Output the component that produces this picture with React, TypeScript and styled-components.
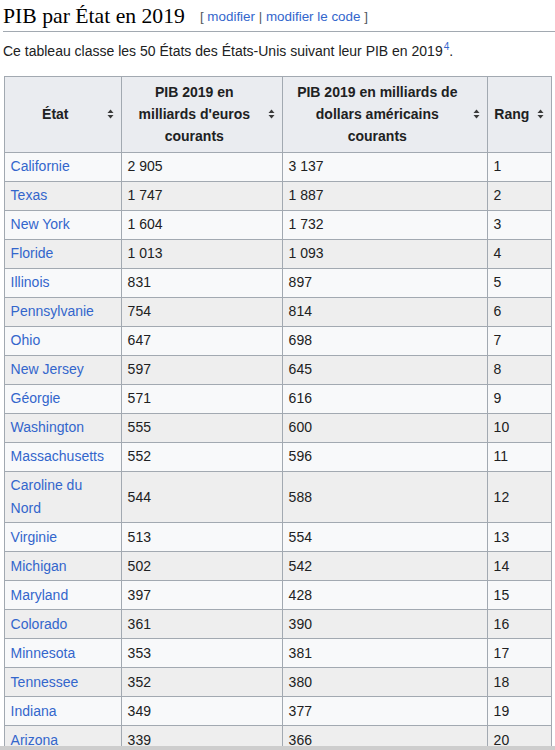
import React from "react";
import styled, { createGlobalStyle } from "styled-components";

const Global = createGlobalStyle`
  html, body { margin: 0; padding: 0; background: #ffffff; }
  body { font-family: "Liberation Sans", Arial, sans-serif; color: #202122; }
`;

const Page = styled.div`
  padding: 0 0 0 3px;
`;

const Heading = styled.h2`
  margin: 0;
  padding: 5px 0 2px;
  border-bottom: 1px solid #a2a9b1;
  font-family: "Liberation Serif", "Times New Roman", serif;
  font-weight: normal;
  font-size: 21.7px;
  line-height: 1.1;
  color: #000;
  display: flex;
  align-items: baseline;
`;

const EditSection = styled.span`
  font-family: "Liberation Sans", Arial, sans-serif;
  font-size: 13.4px;
  color: #54595d;
  margin-left: 15px;
  position: relative;
  top: -2px;
  white-space: pre;
`;

const EditLink = styled.a`
  color: #3366cc;
  text-decoration: none;
`;

const Intro = styled.p`
  margin: 8px 0 0;
  font-size: 14px;
  line-height: 22px;
  color: #202122;
`;

const Sup = styled.sup`
  font-size: 10px;
  line-height: 1;
  margin-left: 1px;
  a { color: #3366cc; text-decoration: none; }
`;

const Table = styled.table`
  margin: 14px 0 0 1px;
  border-collapse: collapse;
  table-layout: fixed;
  width: 547px;
  background: #f8f9fa;
  border: 1px solid #a2a9b1;
  font-size: 14px;
  color: #202122;
`;

const Col = styled.col<{ $w: number }>`
  width: ${(p) => p.$w}px;
`;

const Th = styled.th`
  background: #eaecf0;
  border: 1px solid #a2a9b1;
  padding: 3.8px 21px 3.8px 5.6px;
  line-height: 22.4px;
  font-weight: bold;
  text-align: center;
  position: relative;
`;

const SortIcon = styled.svg`
  position: absolute;
  right: 7px;
  top: 50%;
  margin-top: -5px;
`;

const Row = styled.tr<{ $even: boolean }>`
  background: ${(p) => (p.$even ? "#eeeeee" : "#f8f9fa")};
`;

const Td = styled.td`
  border: 1px solid #a2a9b1;
  padding: 2.8px 5.6px;
  line-height: 22.4px;
  vertical-align: middle;
`;

const Link = styled.a`
  color: #3366cc;
  text-decoration: none;
`;

const BottomBar = styled.div`
  position: fixed;
  left: 0;
  right: 0;
  bottom: 0;
  height: 4px;
  background: #cdcdcd;
`;

const Sort = () => (
  <SortIcon width="7" height="10" viewBox="0 0 7 10">
    <path d="M3.5 0.5 L6.5 4 L0.5 4 Z" fill="#3a3a3a" />
    <path d="M0.5 6 L6.5 6 L3.5 9.5 Z" fill="#3a3a3a" />
  </SortIcon>
);

const rows: [string, string, string, number][] = [
  ["Californie", "2 905", "3 137", 1],
  ["Texas", "1 747", "1 887", 2],
  ["New York", "1 604", "1 732", 3],
  ["Floride", "1 013", "1 093", 4],
  ["Illinois", "831", "897", 5],
  ["Pennsylvanie", "754", "814", 6],
  ["Ohio", "647", "698", 7],
  ["New Jersey", "597", "645", 8],
  ["Géorgie", "571", "616", 9],
  ["Washington", "555", "600", 10],
  ["Massachusetts", "552", "596", 11],
  ["Caroline du Nord", "544", "588", 12],
  ["Virginie", "513", "554", 13],
  ["Michigan", "502", "542", 14],
  ["Maryland", "397", "428", 15],
  ["Colorado", "361", "390", 16],
  ["Minnesota", "353", "381", 17],
  ["Tennessee", "352", "380", 18],
  ["Indiana", "349", "377", 19],
  ["Arizona", "339", "366", 20],
];

export default function App() {
  return (
    <>
      <Global />
      <Page>
        <Heading>
          PIB par État en 2019
          <EditSection>
            {"[ "}
            <EditLink href="#">modifier</EditLink>
            {" | "}
            <EditLink href="#">modifier le code</EditLink>
            {" ]"}
          </EditSection>
        </Heading>
        <Intro>
          Ce tableau classe les 50 États des États-Unis suivant leur PIB en 2019
          <Sup>
            <a href="#">4</a>
          </Sup>
          .
        </Intro>
        <Table>
          <colgroup>
            <Col $w={117} />
            <Col $w={161} />
            <Col $w={205} />
            <Col $w={64} />
          </colgroup>
          <thead>
            <tr>
              <Th>
                État
                <Sort />
              </Th>
              <Th>
                PIB 2019 en milliards d'euros courants
                <Sort />
              </Th>
              <Th>
                PIB 2019 en milliards de dollars américains courants
                <Sort />
              </Th>
              <Th>
                Rang
                <Sort />
              </Th>
            </tr>
          </thead>
          <tbody>
            {rows.map(([name, eur, usd, rank], i) => (
              <Row key={name} $even={i % 2 === 1}>
                <Td>
                  <Link href="#">{name}</Link>
                </Td>
                <Td>{eur}</Td>
                <Td>{usd}</Td>
                <Td>{rank}</Td>
              </Row>
            ))}
          </tbody>
        </Table>
      </Page>
      <BottomBar />
    </>
  );
}
